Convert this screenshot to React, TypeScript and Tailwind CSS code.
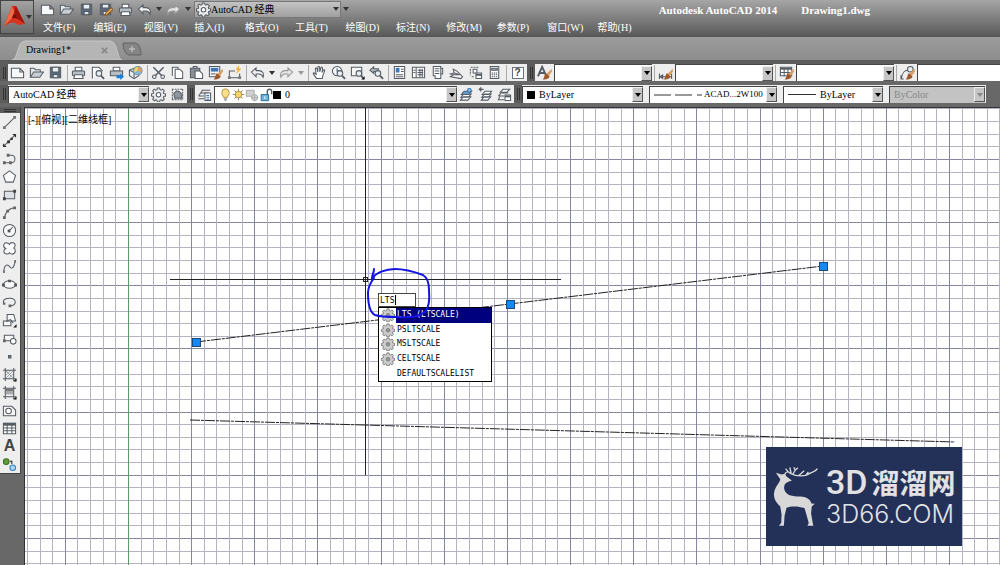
import { useState } from 'react';
import type { ReactNode } from 'react';

const MENUS = ['文件(F)', '编辑(E)', '视图(V)', '插入(I)', '格式(O)', '工具(T)', '绘图(D)', '标注(N)', '修改(M)', '参数(P)', '窗口(W)', '帮助(H)'];

const COMMANDS = [
  { label: 'LTS (LTSCALE)', gear: true },
  { label: 'PSLTSCALE', gear: true },
  { label: 'MSLTSCALE', gear: true },
  { label: 'CELTSCALE', gear: true },
  { label: 'DEFAULTSCALELIST', gear: false },
];

const gearPath =
  'M6.8 1h2.4l.4 1.9 1.2.5 1.7-1.1 1.7 1.7-1.1 1.7.5 1.2 1.9.4v2.4l-1.9.4-.5 1.2 1.1 1.7-1.7 1.7-1.7-1.1-1.2.5-.4 1.9H6.8l-.4-1.9-1.2-.5-1.7 1.1-1.7-1.7 1.1-1.7-.5-1.2-1.9-.4V7.300l1.900-.4.5-1.200L1.800 4l1.700-1.700 1.700 1.100 1.200-.5z';

const brush = (
  <g stroke="none">
    <path d="M15.500 4l-5.500 5.500 2.500 2.500L16 7z" fill="#d9a066" />
    <path d="M9.500 8.500l4 4c-1.500 2.500-4 3-7.500 3C8 14 7.500 11 9.500 8.500z" fill="#9c5a2c" />
  </g>
);
const lens = (
  <>
    <circle cx="9.500" cy="9" r="3" fill="#e6edf4" />
    <path d="M11.700 11.300L15 14.700" strokeWidth="2" />
  </>
);
const corner = <path d="M15.500 12v3.500H12z" fill="#111" stroke="none" />;

const ICONS: Record<string, ReactNode> = {
  new: <path d="M1.500 3.500h9l4 4v6h-13zM10.500 3.500v4h4" fill="#f8f8f8" />,
  open: (
    <>
      <path d="M1.500 13V3.500h4l1.500 1.500h5v2.500" fill="#e4e7ea" />
      <path d="M1.500 13L5 7.500h10.500l-4 5.500z" fill="#c9ced4" />
    </>
  ),
  save: (
    <>
      <path d="M2.500 2.500h11v11h-11z" fill="#5a6b80" />
      <path d="M4.500 2.500h7v5h-7z" fill="#e8edf2" />
      <path d="M5.500 10h5v3.500h-5z" fill="#dfe3e8" />
    </>
  ),
  saveas: (
    <>
      <path d="M2.500 2.500h11v11h-11z" fill="#5a6b80" />
      <path d="M4.500 2.500h7v4h-7zM5.500 10h4v3.500h-4z" fill="#e8edf2" />
      <path d="M8 12l6-6 2 2-6 5.500-2.500.5z" fill="#f0b45a" stroke="#8d5a20" />
    </>
  ),
  print: (
    <>
      <path d="M4.500 2.500h7v4h-7z" fill="#fff" />
      <rect x="1.500" y="6.500" width="13" height="5" rx="1" fill="#b9bec5" />
      <path d="M4 10.500h8l1 4H3z" fill="#fff" />
    </>
  ),
  preview: (
    <>
      <path d="M2.500 14.500v-12h7l4 4" fill="#f8f8f8" />
      {lens}
    </>
  ),
  publish: (
    <>
      <path d="M4.500 2.500h7v4h-7z" fill="#fff" />
      <path d="M1.500 6.500h13v5h-13z" fill="#b9bec5" />
      <path d="M8 11h4V9l4 3.500-4 3.500v-2H8z" fill="#1d7fd6" stroke="none" />
    </>
  ),
  cube: (
    <>
      <path d="M1.500 5.500l5-2 5 2v6l-5 3-5-3z" fill="#e3eef2" />
      <path d="M1.500 5.500l5 2.500M6.500 8v6.500" />
      <circle cx="10.500" cy="6" r="4.500" fill="#8bc98b" stroke="#7d8a92" />
      <path d="M10.500 2v4l-3.500 2A4 4 0 0110.500 2z" fill="#e9d36a" stroke="none" />
      <path d="M10.500 6l3.500 2a4 4 0 01-7 0z" fill="#7db7e3" stroke="none" />
      <path d="M10.500 2a4 4 0 013.500 6l-3.500-2z" fill="#e59a6a" stroke="none" />
    </>
  ),
  cut: (
    <>
      <path d="M2.500 2.500l9 9M13.500 2.500l-9 9" strokeWidth="1.500" />
      <circle cx="3.500" cy="12.500" r="1.900" />
      <circle cx="12.500" cy="12.500" r="1.900" />
    </>
  ),
  copy: (
    <>
      <path d="M2.500 11.500v-9h6v2" fill="#fff" />
      <path d="M5.500 4.500h5l3 3v7h-8z" fill="#fff" />
    </>
  ),
  paste: (
    <>
      <path d="M1.500 3.500h10v10h-10z" fill="#8b8f95" />
      <path d="M4.500 1.500h4v2h-4z" fill="#ddd" />
      <path d="M6.500 6.500h5l3 3v5h-8z" fill="#fff" />
    </>
  ),
  match: (
    <>
      <path d="M1.500 1.500h11v11h-11z" fill="#f8f8f8" />
      <path d="M3 3h8v4H3z" fill="#4076b5" stroke="none" />
      <path d="M3 9.500h5" />
      {brush}
    </>
  ),
  blockedit: (
    <>
      <path d="M2.500 12.500v-6h6M2 13.500h12M13.500 9v4" />
      <path d="M1 12h3v3H1zM12 12h3v3h-3z" fill="#777" stroke="none" />
      <path d="M13 0l-4 5h2.500L9.500 9.500 15.500 4h-3z" fill="#f2ae30" stroke="none" />
    </>
  ),
  undo: <path d="M1.500 7.500l5-4.500v3h3c4 0 5.500 3 4.500 7-1-2.500-2-3.500-4.500-3.500h-3v3z" fill="#f2f2f2" />,
  redo: <path d="M14.500 7.500l-5-4.500v3h-3c-4 0-5.500 3-4.500 7 1-2.500 2-3.500 4.500-3.500h3v3z" fill="#e6e6e6" stroke="#999" />,
  pan: <path d="M5 14.500L1.500 9.500c-.5-1.500 1-1.500 1.500-.5l1.500 1L3.500 4c0-1.200 1.500-1.200 1.800 0l.9 3.500L6.300 2.500c0-1.300 1.700-1.300 1.800 0l.2 4.800L9.500 3c.3-1.200 1.800-.8 1.700.4l-.4 4.600 1.200-2.500c.7-1 1.900-.3 1.500.8l-2 5.200-.5 3z" fill="#fff" />,
  zoomrt: (
    <>
      <circle cx="6.500" cy="6.500" r="5" fill="#f4f7fa" />
      <path d="M6.500 3.500v3h3" />
      {lens}
    </>
  ),
  zoomwin: (
    <>
      <path d="M1.500 2.500h11v9h-11z" fill="#f8f8f8" />
      {lens}
      {corner}
    </>
  ),
  zoomprev: (
    <>
      <path d="M1 5.500L5 2v2h5v3H5v2z" fill="#b5bac1" />
      {lens}
    </>
  ),
  props: (
    <>
      <path d="M2.500 1.500h11v13h-11z" fill="#fff" />
      <path d="M4 3h4v5H4z" fill="#3c78b8" stroke="none" />
      <path d="M9.500 4.500h3M9.500 7h3M4 10.500h8M4 12.500h8" />
    </>
  ),
  center: (
    <>
      <path d="M1.500 2.500h13v11h-13z" fill="#fff" />
      <path d="M5.500 2.500v11M7 5.500h6M7 8h6M7 10.500h6M9.500 4v9M12 4v9M2.500 5.500h2M2.500 8h2" />
    </>
  ),
  palette: (
    <>
      <path d="M3.500 1.500h8v13h-6v-3h-2z" fill="#fff" />
      <path d="M5 4h5M5 6.500h5M5 9h5M11.500 3.500h2v6h-2" />
    </>
  ),
  sheet: (
    <>
      <path d="M1.500 12.500l3-2-3-1 4-1-1-4 4 2 6 6-2 2z" fill="#f5f5f5" />
      <path d="M4.500 10.500h7M5.500 8.500l6 2" />
    </>
  ),
  markup: (
    <>
      <path d="M3 2.500h9M2.500 4v7M4 12.500h3" strokeDasharray="2 1" />
      <path d="M5.500 4.500h4v4h-4zM8.500 8.500h6v6h-6z" fill="#fff" />
      <path d="M8.500 10.500h6" strokeWidth="2" />
    </>
  ),
  calc: (
    <>
      <path d="M3.500 1.500h9v13h-9z" fill="#fff" />
      <path d="M5 3.500h6v2H5z" fill="#9ea7b0" />
      <path d="M5 8.500h6M5 10.500h6M5 12.500h6" strokeDasharray="1.500 .7" />
    </>
  ),
  textstyle: (
    <>
      <path d="M1 12L5.500 2 10 12M3 8.500h5" strokeWidth="2" />
      {brush}
    </>
  ),
  dimstyle: (
    <>
      <path d="M1.500 9v6M14.500 9v6M1.500 12.500h13M2 12.500l3-2v4z" />
      {brush}
    </>
  ),
  tablestyle: (
    <>
      <path d="M1.500 2.500h12v9h-12z" fill="#fff" />
      <path d="M1.500 4h12" strokeWidth="2" />
      <path d="M1.500 8h12M5.500 3v9M9.500 3v9" />
      {brush}
    </>
  ),
  leader: (
    <>
      <path d="M1.500 14.500c1-7 3-9 7-9M1 11v4h3" />
      <circle cx="11" cy="4.500" r="3" fill="#e6eef5" />
      {brush}
    </>
  ),
  gear: (
    <>
      <path d={gearPath} fill="#ececec" />
      <circle cx="8" cy="8.300" r="2.400" fill="#fff" />
    </>
  ),
  wsgear: (
    <>
      <path d="M2 2.500h12M2.500 2v12M13.500 2v12M2 13.500h12" strokeDasharray="2 1" />
      <path d="M4 7l3-3 3 1 3 3-1 4H5z" fill="#8f959c" />
    </>
  ),
  layerprops: (
    <>
      <path d="M5 3.500h9M3.500 6.500h9M1.500 9.500h6M2 9l4-5.500M1.500 12.500h6" />
      <path d="M8.500 6.500h6v8h-6z" fill="#fff" />
      <path d="M10 9h3M10 11h3M10 13h3" stroke="#2f75b5" />
    </>
  ),
  bulb: (
    <>
      <path d="M5.500 11.500C5 9 3.500 8.500 3.500 5.500a4.500 4.500 0 019 0c0 3-1.500 3.500-2 6z" fill="#fbe08a" stroke="#b09040" />
      <path d="M6 13.500h4M7 15h2" />
    </>
  ),
  sun: (
    <>
      <path d="M8 1v14M1 8h14M3 3l10 10M13 3L3 13" stroke="#8a7a50" />
      <circle cx="8" cy="8" r="4" fill="#fbd56a" stroke="#a98a3a" />
    </>
  ),
  freeze: (
    <g stroke="#aaa">
      <path d="M1.500 2.500h9v7h-9z" fill="#d0d0d0" />
      <circle cx="11" cy="11" r="3.500" fill="#d8d8d8" />
      <path d="M11 7v8M7 11h8" />
    </g>
  ),
  lock: (
    <>
      <path d="M9.500 8V4a2.500 2.500 0 015 0v3" strokeWidth="1.600" />
      <path d="M2.500 7.500h8.500v7H2.500z" fill="#6db7dc" stroke="#2c6a91" />
      <path d="M6.700 9.500v3" stroke="#fff" />
    </>
  ),
  layer1: (
    <>
      <path d="M4.500 10.500h8l-3 3.500h-8zM5 7.500h8l-3 3.500H2z" fill="#fff" />
      <path d="M5.500 4.500h8l-3 3.500h-8z" fill="#5e9bd0" />
      <circle cx="11" cy="3.500" r="2" fill="#8fc0e6" stroke="#2f75b5" />
    </>
  ),
  layer2: (
    <>
      <path d="M6.500 10.500h7l-3 3.500h-7zM7 7.500h7L11 11H4zM7.500 4.500h7L11.500 8h-7z" fill="#fff" />
      <path d="M6 2.500H1.500M3.500 .5l-2 2 2 2" strokeWidth="1.400" />
    </>
  ),
  layer3: (
    <>
      <path d="M6.500 2.500h7l-3 3h-7zM5 6.500h7M1.500 9.500l3-3M1.500 9.500h6M3 10.500l-1.500 3h6" fill="#fff" />
      <path d="M8.500 8.500h6v6h-6z" fill="#fff" />
      <path d="M8.500 10h6" strokeWidth="2" />
    </>
  ),
  line: (
    <>
      <path d="M3 13L13 3" />
      <path d="M1 12h3v3H1zM12 1h3v3h-3z" fill="#777" stroke="none" />
    </>
  ),
  xline: (
    <>
      <path d="M2 14L14 2" />
      <path d="M1 11v4h4zM15 5V1h-4zM5.500 8h3v3h-3zM9 5h2.500v2.500H9z" fill="#333" stroke="none" />
    </>
  ),
  pline: (
    <>
      <path d="M2 12.500h8c5 0 5-8 0-8H7" />
      <path d="M1 11h3v3H1zM7.500 11h3v3h-3zM5 3h3v3H5z" fill="#666" stroke="none" />
    </>
  ),
  polygon: <path d="M8 2l6.500 4.800L12 14H4L1.500 6.800z" fill="#fafafa" />,
  rect: (
    <>
      <path d="M2.500 4.500h11v8h-11z" fill="#dde1e6" />
      <path d="M1 11h3v3H1zM12 3h3v3h-3z" fill="#444" stroke="none" />
    </>
  ),
  arc: (
    <>
      <path d="M2.500 14C3 8 8 3 14 3" />
      <path d="M1 12h3v3H1zM12 1.500h3v3h-3zM4.500 5h3v3h-3z" fill="#666" stroke="none" />
    </>
  ),
  circle: (
    <>
      <circle cx="8" cy="8" r="6.500" fill="#fafafa" />
      <path d="M7.500 8.500l4-4" />
      <path d="M6 7h3v3H6z" fill="#555" stroke="none" />
    </>
  ),
  cloud: <path d="M4 8C0 6 2 1.500 5 2c1.500 0 2.500 1 3 1.500C9 1 14 1 14 4.500c0 2-1 2.500-1.500 3 2 .5 3 6-1.500 6.500-2 0-2.500-1-3-1.500-1 2-6 2-6-1.500C2 9 3 8.500 4 8z" fill="#fafafa" />,
  spline: (
    <>
      <path d="M2 14C2 6 6 5 8 8s5 2 6-6" />
      <path d="M1 12h2v3H1zM13 1h2v3h-2z" fill="#777" stroke="none" />
    </>
  ),
  ellipse: (
    <>
      <ellipse cx="8" cy="8" rx="6.500" ry="4" fill="#fafafa" />
      <path d="M0 7h3v3H0zM13 7h3v3h-3zM6.500 3h3v2.500h-3z" fill="#555" stroke="none" />
    </>
  ),
  earc: (
    <>
      <path d="M2 9C0 5 4 3.500 8 3.500c8 0 8 8 1 8" />
      <path d="M7 10h3v3H7zM1 8h2.500v2.500H1z" fill="#666" stroke="none" />
    </>
  ),
  insert: (
    <>
      <path d="M5.500 1.500h7l2 7h-9zM1.500 8.500h8v5h-8z" fill="#f6f6f6" />
      <path d="M4 9l5-2 3 4" />
      {corner}
    </>
  ),
  block: (
    <>
      <path d="M2.500 4.500h10v6h-10z" fill="#f6f6f6" />
      <circle cx="12" cy="11" r="3" fill="#fff" />
      <path d="M1 9h3v3H1z" fill="#666" stroke="none" />
    </>
  ),
  point: <path d="M7 7h2.500v2.500H7z" fill="#777" />,
  hatch: (
    <>
      <path d="M3.500 1v14M12.500 1v14M1 3.500h14M1 12.500h14" />
      <path d="M4 6l2-2M4 9l5-5M4 12l8-8M7 12l5-5M4 4l8 8" strokeWidth=".5" />
      {corner}
    </>
  ),
  gradient: (
    <>
      <path d="M4 4h8v3H4z" fill="#777" stroke="none" />
      <path d="M4 7h8v3H4z" fill="#aaa" stroke="none" />
      <path d="M3.500 1v14M12.500 1v14M1 3.500h14M1 12.500h14" />
      {corner}
    </>
  ),
  region: (
    <>
      <path d="M1.500 3.500h9l4 4v6h-13z" fill="#f6f6f6" />
      <circle cx="7" cy="8.500" r="3" fill="#fff" />
    </>
  ),
  table: (
    <>
      <path d="M1.500 2.500h13v11h-13z" fill="#fff" />
      <path d="M1.500 3.500h13" strokeWidth="3" />
      <path d="M1.500 7.500h13M1.500 10.500h13M5.500 4v9.500M10.500 4v9.500" />
    </>
  ),
  addsel: (
    <>
      <circle cx="4.500" cy="5" r="3" fill="#5e9e35" stroke="#3d7020" />
      <circle cx="11.500" cy="11.500" r="3" fill="#a9d3f5" stroke="#3b83bd" />
      <path d="M8.500 4.500h2v3" stroke="#222" />
    </>
  ),
};

function Icon({ name, size = 'h-[15px] w-[15px]' }: { name: string; size?: string }) {
  return (
    <svg viewBox="0 0 16 16" className={`${size} shrink-0`} fill="none" stroke="#565c64" strokeWidth="1.100" aria-hidden="true">
      {ICONS[name]}
    </svg>
  );
}

function ToolButton({ name }: { name: string }) {
  return (
    <button type="button" aria-label={name} className="flex h-full w-[19px] shrink-0 items-center justify-center hover:bg-white">
      {name === 'help' ? (
        <span className="flex h-3 w-3 items-center justify-center border border-gray-500 bg-white font-['Liberation_Sans',sans-serif] text-[10px] font-bold text-gray-700">?</span>
      ) : name === 'mtext' ? (
        <span className="font-['Liberation_Sans',sans-serif] text-[16px] leading-none font-bold text-[#444]">A</span>
      ) : (
        <Icon name={name} />
      )}
    </button>
  );
}

function DropButton({ label, light = false }: { label: string; light?: boolean }) {
  return (
    <button type="button" aria-label={label} className="flex h-full w-[10px] shrink-0 items-center justify-center">
      <svg viewBox="0 0 6 4" className="h-1 w-1.5" fill={light ? '#999' : '#333'}>
        <path d="M0 0h6L3 4z" />
      </svg>
    </button>
  );
}

const Separator = () => <span className="mr-px ml-0.5 h-4 w-px shrink-0 bg-[#aaa]" />;

function Grip() {
  return (
    <span className="flex h-full w-[8px] shrink-0 items-center justify-center gap-px bg-[#5b5b5b]">
      <span className="h-3 w-px bg-[#333]" />
      <span className="h-3 w-px bg-[#333]" />
    </span>
  );
}

interface ComboProps {
  label: string;
  value?: string;
  width: string;
  before?: ReactNode;
  disabled?: boolean;
  textSize?: string;
}

function Combo({ label, value = '', width, before, disabled = false, textSize = 'text-[10px]' }: ComboProps) {
  return (
    <div className={`${width} ${disabled ? 'bg-[#c3c3c3]' : 'bg-white'} flex h-[17px] shrink-0 items-center border-t border-l border-[#444] pl-1`}>
      {before}
      <select aria-label={label} disabled={disabled} className={`${textSize} ${disabled ? 'text-[#888]' : 'text-black'} h-full min-w-0 flex-1 appearance-none bg-transparent outline-none`}>
        <option>{value}</option>
      </select>
      <span className="pointer-events-none flex h-[15px] w-[11px] shrink-0 items-center justify-center border border-t-[#eee] border-r-[#555] border-b-[#555] border-l-[#eee] bg-[#c6c6c6]">
        <svg viewBox="0 0 6 4" className="h-1 w-1.5" fill={disabled ? '#888' : '#000'}>
          <path d="M0 0h6L3 4z" />
        </svg>
      </span>
    </div>
  );
}

function TitleBar() {
  return (
    <header className="flex h-[37px] border-b border-[#555] bg-linear-to-b from-[#a6a6a6] to-[#5a5a5a]">
      <button type="button" aria-label="应用程序" className="flex h-[34px] w-[34px] shrink-0 items-center border border-[#444] bg-linear-to-b from-[#a2a2a2] to-[#6c6c6c] pl-0.5">
        <svg viewBox="0 0 22 24" className="h-6 w-[22px]">
          <path d="M9 1h4l9 18-7-1-8-1-6 4z" fill="#c92a1b" />
          <path d="M9 1L1 21l6-4 5-10z" fill="#ee6a45" />
          <path d="M13 1l9 18-7-1-4-11z" fill="#a01410" />
          <path d="M1 21l7-7h7l7 5-7 1-4-3-4 1z" fill="#d8331f" />
          <path d="M9 13l2-5 3 5z" fill="#7c0d0b" />
        </svg>
        <svg viewBox="0 0 6 4" className="ml-px h-1 w-1.5" fill="#333">
          <path d="M0 0h6L3 4z" />
        </svg>
      </button>
      <div className="min-w-0 flex-1">
        <div className="flex h-[18px] items-center">
          <div className="flex h-full shrink-0 items-center pl-1">
            <ToolButton name="new" />
            <ToolButton name="open" />
            <span className="w-px" />
            <ToolButton name="save" />
            <ToolButton name="saveas" />
            <span className="w-px" />
            <ToolButton name="print" />
            <ToolButton name="undo" />
            <DropButton label="放弃列表" />
            <ToolButton name="redo" />
            <DropButton label="重做列表" />
          </div>
          <div className="ml-px flex h-[17px] w-[147px] shrink-0 items-center border border-[#777] bg-linear-to-b from-[#c4c4c4] to-[#a0a0a0] pl-px">
            <Icon name="gear" />
            <select aria-label="工作空间" className="h-full min-w-0 flex-1 appearance-none bg-transparent text-[10px] text-black outline-none">
              <option>AutoCAD 经典</option>
            </select>
            <svg viewBox="0 0 6 4" className="mr-px h-1 w-1.5" fill="#333">
              <path d="M0 0h6L3 4z" />
            </svg>
          </div>
          <DropButton label="自定义" />
          <h1 className="ml-auto pt-0.5 pr-[130px] text-[11px] font-bold whitespace-pre text-white">
            Autodesk AutoCAD 2014
            <span className="ml-6">Drawing1.dwg</span>
          </h1>
        </div>
        <nav className="grid h-5 w-[614px] grid-cols-12 items-center pl-[9px]">
          {MENUS.map((menu) => (
            <button key={menu} type="button" className="text-left text-[10px] leading-none whitespace-nowrap text-white">
              {menu}
            </button>
          ))}
        </nav>
      </div>
    </header>
  );
}

function FileTabs() {
  return (
    <div className="flex h-[23px] items-end bg-linear-to-b from-[#9c9c9c] to-[#8d8d8d] pl-3">
      <div className="relative flex h-[20px] w-[110px] items-center pl-[14px]">
        <svg viewBox="0 0 110 20" className="absolute inset-0 h-full w-full">
          <path d="M0 20C6 20 5 1 13 1h85c8 0 7 19 12 19z" fill="#b5b5b5" stroke="#c6c6c6" />
        </svg>
        <button type="button" className="relative text-[10px] leading-none text-black">Drawing1*</button>
        <button type="button" aria-label="关闭" className="relative ml-auto pr-[14px]">
          <svg viewBox="0 0 8 8" className="h-[7px] w-[7px]" stroke="#888" strokeWidth="1.800">
            <path d="M1 1l6 6M7 1L1 7" />
          </svg>
        </button>
      </div>
      <button type="button" aria-label="新图形" className="mb-1">
        <svg viewBox="0 0 20 14" className="h-[14px] w-5">
          <path d="M1 1h12c4 0 6 6 6 12H8C4 13 1 8 1 1z" fill="#858585" stroke="#636363" />
          <path d="M10 4v6M7 7h6" stroke="#bbb" strokeWidth="1.500" />
        </svg>
      </button>
    </div>
  );
}

function StandardToolbar() {
  return (
    <div className="flex h-[17px] items-center overflow-hidden">
      <Grip />
      <div className="flex h-full shrink-0 items-center bg-[#eee]">
        {['new', 'open', 'save'].map((n) => <ToolButton key={n} name={n} />)}
        <Separator />
        {['print', 'preview', 'publish', 'cube'].map((n) => <ToolButton key={n} name={n} />)}
        <Separator />
        {['cut', 'copy', 'paste', 'match', 'blockedit'].map((n) => <ToolButton key={n} name={n} />)}
        <Separator />
        <ToolButton name="undo" />
        <DropButton label="放弃列表" />
        <ToolButton name="redo" />
        <DropButton label="重做列表" light />
        <Separator />
        {['pan', 'zoomrt', 'zoomwin', 'zoomprev'].map((n) => <ToolButton key={n} name={n} />)}
        <Separator />
        {['props', 'center', 'palette', 'sheet', 'markup', 'calc'].map((n) => <ToolButton key={n} name={n} />)}
        <Separator />
        <ToolButton name="help" />
      </div>
      <Grip />
      <div className="flex h-full shrink-0 items-center bg-[#eee]">
        <ToolButton name="textstyle" />
        <Combo label="文字样式" width="w-[98px]" />
        <Separator />
        <ToolButton name="dimstyle" />
        <Combo label="标注样式" width="w-[98px]" />
        <Separator />
        <ToolButton name="tablestyle" />
        <Combo label="表格样式" width="w-[98px]" />
        <Separator />
        <ToolButton name="leader" />
        <Combo label="多重引线样式" width="w-[98px]" />
      </div>
    </div>
  );
}

function LayerToolbar() {
  const swatch = <span className="mr-1 h-2 w-2 shrink-0 bg-black" />;
  return (
    <div className="flex h-[18px] items-center overflow-hidden">
      <Grip />
      <div className="flex h-full shrink-0 items-center bg-[#eee]">
        <Combo label="工作空间" value="AutoCAD 经典" width="w-[141px]" />
        <ToolButton name="gear" />
        <ToolButton name="wsgear" />
      </div>
      <Grip />
      <div className="flex h-full shrink-0 items-center bg-[#eee]">
        <ToolButton name="layerprops" />
        <Combo
          label="图层"
          value="0"
          width="w-[243px]"
          before={
            <>
              <Icon name="bulb" size="h-[13px] w-[13px]" />
              <Icon name="sun" size="h-[13px] w-[13px]" />
              <Icon name="freeze" size="h-[14px] w-[14px]" />
              <Icon name="lock" size="h-[14px] w-[14px]" />
              {swatch}
            </>
          }
        />
        {['layer1', 'layer2', 'layer3'].map((n) => <ToolButton key={n} name={n} />)}
      </div>
      <Grip />
      <div className="flex h-full shrink-0 items-center gap-1.5 bg-[#eee] pr-px">
        <Combo label="颜色" value="ByLayer" width="w-[121px]" before={swatch} />
        <Combo
          label="线型"
          value="ACAD...2W100"
          width="w-[128px]"
          textSize="text-[9px]"
          before={
            <svg viewBox="0 0 48 2" className="mr-0.5 h-0.5 w-12 shrink-0" stroke="#333">
              <path d="M0 1h17M21 1h17M43 1h5" />
            </svg>
          }
        />
        <Combo label="线宽" value="ByLayer" width="w-[100px]" before={<span className="mr-1 h-px w-7 shrink-0 bg-[#333]" />} />
        <Combo label="打印样式" value="ByColor" width="w-[96px]" disabled />
      </div>
    </div>
  );
}

const DRAW_TOOLS = ['line', 'xline', 'pline', 'polygon', 'rect', 'arc', 'circle', 'cloud', 'spline', 'ellipse', 'earc', 'insert', 'block', 'point', 'hatch', 'gradient', 'region', 'table', 'mtext', 'addsel'];

function DrawToolbar() {
  return (
    <aside className="w-[21px] shrink-0 self-start border-r border-b border-[#444] bg-[#eee]">
      <div className="flex h-[6px] flex-col justify-center gap-px bg-[#5b5b5b] px-1">
        <span className="h-px bg-[#333]" />
        <span className="h-px bg-[#333]" />
      </div>
      {DRAW_TOOLS.map((tool) => (
        <div key={tool} className="h-[18px]">
          <ToolButton name={tool} />
        </div>
      ))}
    </aside>
  );
}

// Grid spacing in px, a heavier line every fifth one
const STEP = 12.63;

function GridLines() {
  const columns = Array.from({ length: 210 }, (_, i) => i - 8);
  const rows = Array.from({ length: 130 }, (_, i) => i - 4);
  return (
    <g shapeRendering="crispEdges">
      {rows.map((k) => {
        const y = Math.round(51 + k * STEP) + 0.5;
        return <line key={`r${k}`} x1="0" x2="2600" y1={y} y2={y} stroke={k % 5 === 0 ? '#8587a0' : '#b3b4c0'} />;
      })}
      {columns.map((k) => {
        const x = Math.round(103 + k * STEP) + 0.5;
        return <line key={`c${k}`} x1={x} x2={x} y1="0" y2="1600" stroke={k === 0 ? '#5f9c65' : k % 5 === 0 ? '#8587a0' : '#b3b4c0'} />;
      })}
    </g>
  );
}

function Drawing() {
  const grips = [[171, 234], [485, 196], [798, 158]];
  return (
    <svg className="absolute inset-0 h-full w-full">
      <GridLines />
      <g stroke="#222" strokeDasharray="10 1 3 1">
        <line x1="171" y1="234" x2="798" y2="158" />
        <line x1="165" y1="312" x2="930" y2="334" />
      </g>
      <path d="M145 171.500h391M340.500 0v367" stroke="#222" />
      <rect x="338.500" y="169.500" width="4" height="4" fill="none" stroke="#222" />
      {grips.map(([x, y]) => (
        <rect key={x} x={x - 3.500} y={y - 3.500} width="8" height="8" fill="#1488f5" stroke="#1d4a7a" />
      ))}
    </svg>
  );
}

function CommandPopup() {
  const [text, setText] = useState('LTS');
  const [selected, setSelected] = useState(0);

  return (
    <div className="absolute top-[185px] left-[353px] w-[114px] font-['DejaVu_Sans_Mono',monospace] text-[8px] text-black">
      <div className="flex h-[14px] w-[38px] items-center border border-[#444] bg-white">
        <input aria-label="命令" value={text} onChange={(e) => setText(e.target.value)} className="h-full w-4 bg-transparent pl-px outline-none" />
        <span className="h-[10px] w-px bg-black" />
      </div>
      <div role="listbox" aria-label="命令建议" className="grid h-[75px] grid-rows-5 border border-black bg-white">
        {COMMANDS.map((command, index) => (
          <button key={command.label} type="button" role="option" aria-selected={index === selected} onClick={() => setSelected(index)} className="flex min-h-0 items-center text-left">
            <span className="flex w-[17px] shrink-0 justify-center">
              {command.gear && (
                <svg viewBox="0 0 16 16" className="h-[14px] w-[14px]" stroke="#777">
                  <path d={gearPath} fill="#ccc" />
                  <circle cx="8" cy="8.300" r="2" fill="#999" />
                </svg>
              )}
            </span>
            <span className={`flex h-full flex-1 items-center pl-px whitespace-pre ${index === selected ? 'bg-[#00007f] text-white' : ''}`}>{command.label}</span>
          </button>
        ))}
      </div>
    </div>
  );
}

function Watermark() {
  return (
    <div className="absolute top-[339px] left-[741px] flex h-[99px] w-[196px] items-center bg-[#233158] pl-1.5 text-[#e2e2e4]">
      <svg viewBox="50 90 140 184" className="h-[61px] w-[47px] shrink-0" fill="#d8d8d9">
        <path d="M61 110l17 6 10-3 5 9 16 12-12 4c-7 2-13 9-11 21 4 19 24 23 49 23 17 1 30 8 33 21l10 1-9 8-2 21 5 29 2 8h-18l4-8-8-29-5-16c-18-6-40-7-54-1l-6 24-2 30H70l7-9 1-25-4-24c-14-12-22-27-18-44 3-16 16-26 18-38z" />
        <path d="M88 115c3-9 10-10 16-3 21 11 46 10 58 1 8-6 18-4 24-15M98 107l-8-9M107 112l-4-18M112 115l7-12-4-9M119 103l8-8M131 118l15-14M150 119l9-11" fill="none" stroke="#d8d8d9" strokeWidth="4" />
      </svg>
      <div className="pl-[7px]">
        <div className="flex h-8 items-center gap-1 leading-none">
          <span className="font-['Roboto',sans-serif] text-[34px] font-medium">3D</span>
          <span className="font-['Noto_Sans_CJK_SC',sans-serif] text-[28px] font-bold">溜溜网</span>
        </div>
        <div className="pt-1 font-['Inter',sans-serif] text-[25px] leading-none font-light">3D66.COM</div>
      </div>
    </div>
  );
}

function Canvas() {
  return (
    <main className="relative min-w-0 flex-1 overflow-hidden border-t border-[#333] bg-white">
      <Drawing />
      <div className="relative flex pt-1 pl-[3px] text-[10px] leading-[15px] text-black">
        <button type="button">[-]</button>
        <button type="button">[俯视]</button>
        <button type="button">[二维线框]</button>
      </div>
      <CommandPopup />
      <svg className="pointer-events-none absolute inset-0 h-full w-full" fill="none" stroke="#1414e0" strokeWidth="2" strokeLinecap="round">
        <path d="M349 161c0 4-2 6-2 9 4-5 13-9 23-9 11 0 20 3 28 6 5 3 6 8 6 15 1 12 0 18-4 22-6 5-15 6-28 5-10 0-17 0-22-2-6-3-7-14-7-22 0-7 3-11 6-15" />
      </svg>
      <Watermark />
    </main>
  );
}

export default function App() {
  return (
    <div className="flex h-screen flex-col overflow-hidden bg-[#686868] font-['Liberation_Serif','Noto_Sans_CJK_SC',serif]">
      <TitleBar />
      <FileTabs />
      <div className="border-t-4 border-[#5b5b5b]">
        <StandardToolbar />
        <div className="h-1" />
        <LayerToolbar />
      </div>
      <div className="flex min-h-0 flex-1 pt-1">
        <DrawToolbar />
        <div className="w-1 shrink-0 border-r border-[#333]" />
        <Canvas />
      </div>
    </div>
  );
}
